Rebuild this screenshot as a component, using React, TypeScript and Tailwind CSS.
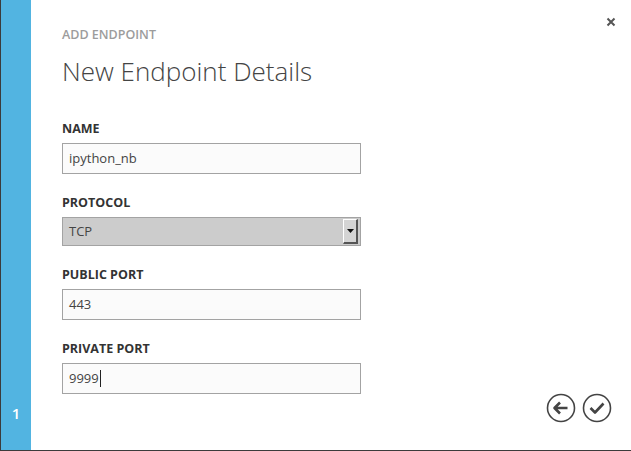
import React from 'react'

const font = { fontFamily: '"Open Sans", "Noto Sans", sans-serif' }

function Field({ label, value, caret, className = '' }: { label: string; value: string; caret?: boolean; className?: string }) {
  return (
    <div className={className}>
      <div className="text-[12.5px] font-bold leading-[16px] text-[#333333]">{label}</div>
      <div className="mt-[6px] flex h-[31px] w-[299px] items-center border border-[#a3a3a3] bg-[#fbfbfb] pl-[6px] text-[13px] text-[#444444]">
        {value}
        {caret && <span className="ml-px inline-block h-[17px] w-px bg-[#222222]" />}
      </div>
    </div>
  )
}

export default function App() {
  return (
    <div style={font} className="flex h-[451px] w-[631px] border-b border-l border-[#3b3b3b] bg-white">
      <div className="flex w-[30px] flex-col justify-end bg-[#52b4e1] pb-[28px] text-center">
        <span className="text-[15px] font-semibold leading-[18px] text-white">1</span>
      </div>

      <div className="relative flex-1 pl-[31px] pt-[27px]">
        <button className="absolute right-[15px] top-[17px] text-[#555555]">
          <svg width="10" height="10" viewBox="0 0 10 10">
            <path d="M1.5 1.5 L8.5 8.5 M8.5 1.5 L1.5 8.5" stroke="currentColor" strokeWidth="2" />
          </svg>
        </button>

        <div className="text-[12.5px] font-semibold uppercase leading-[16px] text-[#9c9c9c]">Add Endpoint</div>
        <h1 className="mt-[11px] text-[26px] font-light leading-[34px] text-[#444444]">New Endpoint Details</h1>

        <Field label="NAME" value="ipython_nb" className="mt-[33px]" />

        <div className="mt-[21px]">
          <div className="text-[12.5px] font-bold leading-[16px] text-[#333333]">PROTOCOL</div>
          <div className="mt-[6px] flex h-[29px] w-[299px] items-center justify-between border border-[#a3a3a3] bg-[#cccccc] pl-[6px] pr-[2px] text-[13px] text-[#444444]">
            TCP
            <div className="flex h-[25px] w-[15px] items-center justify-center border-b-2 border-l border-r-2 border-t border-b-[#555555] border-l-white border-r-[#555555] border-t-white bg-[#d4d4d4]">
              <svg width="7" height="4" viewBox="0 0 7 4">
                <path d="M0 0 H7 L3.5 4 Z" fill="#111111" />
              </svg>
            </div>
          </div>
        </div>

        <Field label="PUBLIC PORT" value="443" className="mt-[21px]" />
        <Field label="PRIVATE PORT" value="9999" caret className="mt-[21px]" />

        <div className="absolute bottom-[27px] right-[19px] flex gap-[6px]">
          <button>
            <svg width="30" height="30" viewBox="0 0 30 30" fill="none" stroke="#444444">
              <circle cx="15" cy="15" r="13.5" strokeWidth="1.6" />
              <path d="M21.5 15 H9 M14 9.5 L8.5 15 L14 20.5" strokeWidth="2.6" strokeLinejoin="round" />
            </svg>
          </button>
          <button>
            <svg width="30" height="30" viewBox="0 0 30 30" fill="none" stroke="#444444">
              <circle cx="15" cy="15" r="13.5" strokeWidth="1.6" />
              <path d="M8.5 15 L13 19.5 L21.5 10.5" strokeWidth="2.6" strokeLinejoin="round" />
            </svg>
          </button>
        </div>
      </div>
    </div>
  )
}
